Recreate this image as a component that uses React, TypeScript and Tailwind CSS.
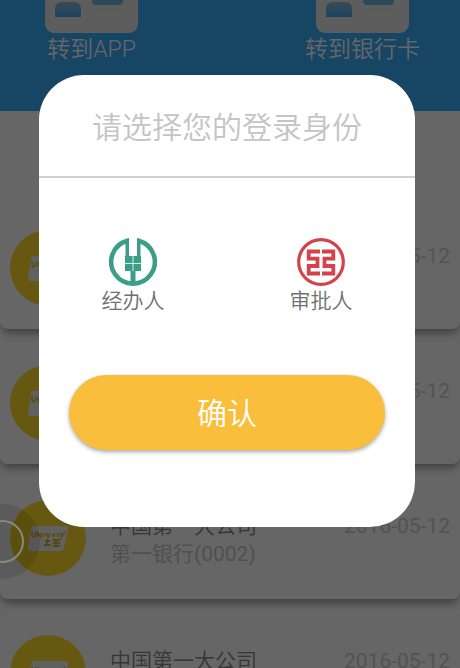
import { useId } from "react";

const records = [
  { company: "中国第一大公司", bank: "第一银行(0002)", date: "2016-05-12" },
  { company: "中国第一大公司", bank: "第一银行(0002)", date: "2016-05-12" },
  { company: "中国第一大公司", bank: "第一银行(0002)", date: "2016-05-12" },
  { company: "中国第一大公司", bank: "第一银行(0002)", date: "2016-05-12" },
];

function TransferIcon() {
  const id = useId();
  return (
    <svg viewBox="0 0 93 67" className="h-[67px] w-[93px]" aria-hidden="true">
      <defs>
        <linearGradient id={id} x1="0" y1="0" x2="0" y2="1">
          <stop offset="0" stopColor="#88bcdc" />
          <stop offset="1" stopColor="#4ca8ee" />
        </linearGradient>
        <linearGradient id={id + "b"} x1="0" y1="0" x2="0" y2="1">
          <stop offset="0" stopColor="#dcdfe2" />
          <stop offset="1" stopColor="#e6e6e6" />
        </linearGradient>
      </defs>
      <rect width="93" height="67" rx="9" fill="#e8e8e8" />
      <circle cx="23" cy="24" r="9" fill="#88bcdc" />
      <path d="M10 51V43Q10 36 17 36H29Q36 36 36 43V51Z" fill={`url(#${id})`} />
      <path d="M47 34H78V36Q77 39 74 39H51Q48 39 47 36Z" fill="#74b4dc" />
      <rect x="49" y="43" width="29" height="5" rx="2" fill={`url(#${id}b)`} />
    </svg>
  );
}

function CompanyLogo() {
  return (
    <svg viewBox="0 0 76 76" className="size-[76px] shrink-0" aria-hidden="true">
      <circle cx="38" cy="38" r="38" fill="#ffdc28" />
      <path d="M23 26H57Q59 26 58 29L54 48Q53 51 50 51H20Q17 51 18 48L21 29Q21 26 23 26Z" fill="#f0f0f0" />
      <path
        d="M22 31V35Q22 38 25 36L26 32M28 37V33L31 37V33M34 33V37M36 33L38 37L40 33M42 35H45M45 33L43 37M48 33V37M50 33L52 36L55 32M52 36L50 40"
        fill="none"
        stroke="#d8b92c"
        strokeWidth="1.5"
      />
      <path d="M35 41H40M37 39V46M34 45H41M43 40H50M43 43H50M43 46H50M46 39V47" stroke="#d8b92c" strokeWidth="2" />
    </svg>
  );
}

function OperatorIcon() {
  return (
    <svg viewBox="0 0 48 48" className="size-12" aria-hidden="true">
      <path d="M18.500 2.700A21.800 21.800 0 1 0 29.500 2.700" fill="none" stroke="#3a9e88" strokeWidth="4.600" />
      <path d="M16.500 1L20 0V18H16.500ZM31.500 1L28 0V18H31.500Z" fill="#3a9e88" />
      <path d="M16 18H32V33H16Z" fill="#3a9e88" />
      <path d="M24 18V33M16 25.500H32" stroke="#fff" strokeWidth="0.800" />
      <path d="M21.500 33H26.500V46H21.500Z" fill="#3a9e88" />
    </svg>
  );
}

function ApproverIcon() {
  return (
    <svg viewBox="0 0 48 48" className="size-12" aria-hidden="true">
      <circle cx="24" cy="24" r="22.300" fill="none" stroke="#d3434c" strokeWidth="3.200" />
      <g fill="none" stroke="#d3434c" strokeWidth="3.800">
        <path d="M23 13.500H11.700V20.700H20.500V28H11.700V35.500H23" />
        <path d="M25 13.500H36.300V20.700H27.500V28H36.300V35.500H25" />
      </g>
    </svg>
  );
}

export default function App() {
  return (
    <div className="relative h-screen overflow-hidden bg-white font-[Roboto,'Noto_Sans_CJK_SC',sans-serif] font-[350]">
      <header className="flex h-[111px] items-end justify-between bg-[#3aadfa] pr-10 pb-11 pl-[34px] text-[23px] leading-[34px] text-white">
        <a href="#app" className="flex w-[115px] flex-col items-center">
          <TransferIcon />
          <span>转到APP</span>
        </a>
        <a href="#card" className="flex w-[115px] flex-col items-center">
          <TransferIcon />
          <span>转到银行卡</span>
        </a>
      </header>

      <ul className="flex flex-col gap-[13px] pt-24">
        {records.map((r, i) => (
          <li
            key={i}
            className="flex h-[122px] items-center rounded-lg bg-white px-[10px] text-[21px] leading-7 shadow-[0_6px_8px_-2px_rgba(0,0,0,0.4)]"
          >
            <CompanyLogo />
            <div className="ml-6 flex-1 pt-1">
              <div className="flex justify-between">
                <h2 className="text-[#888]">{r.company}</h2>
                <time className="font-normal text-[#d0d0d0]">{r.date}</time>
              </div>
              <p className="font-normal text-[#c8c8c8]">{r.bank}</p>
            </div>
          </li>
        ))}
      </ul>

      <div className="absolute inset-0 bg-black/60 pt-[75px] pr-[45px] pl-[39px]">
        <form
          role="dialog"
          aria-labelledby="dialog-title"
          onSubmit={(e) => e.preventDefault()}
          className="rounded-[45px] bg-white pb-[77px]"
        >
          <h1
            id="dialog-title"
            className="border-b-2 border-[#d0d0d0] pt-[30px] pb-[25px] text-center text-[30px] leading-[46px] text-[#c4c4c4]"
          >
            请选择您的登录身份
          </h1>
          <div className="grid grid-cols-2 pt-[60px] text-[21px] leading-[30px] text-[#707070]">
            <label className="flex flex-col items-center">
              <input type="radio" name="role" className="sr-only" />
              <OperatorIcon />
              <span>经办人</span>
            </label>
            <label className="flex flex-col items-center">
              <input type="radio" name="role" className="sr-only" />
              <ApproverIcon />
              <span>审批人</span>
            </label>
          </div>
          <div className="px-[30px] pt-[59px]">
            <button
              type="submit"
              className="h-[75px] w-full rounded-full bg-[#f9be3b] pt-[2px] text-[30px] text-white shadow-[0_2px_4px_rgba(0,0,0,0.35)]"
            >
              确认
            </button>
          </div>
        </form>
      </div>

      <button
        type="button"
        aria-label="快捷菜单"
        className="absolute top-[504px] -left-[35px] flex size-[75px] items-center justify-center rounded-full bg-black/10"
      >
        <span className="size-[43px] rounded-full border-2 border-[#8b8878]" />
      </button>
    </div>
  );
}
